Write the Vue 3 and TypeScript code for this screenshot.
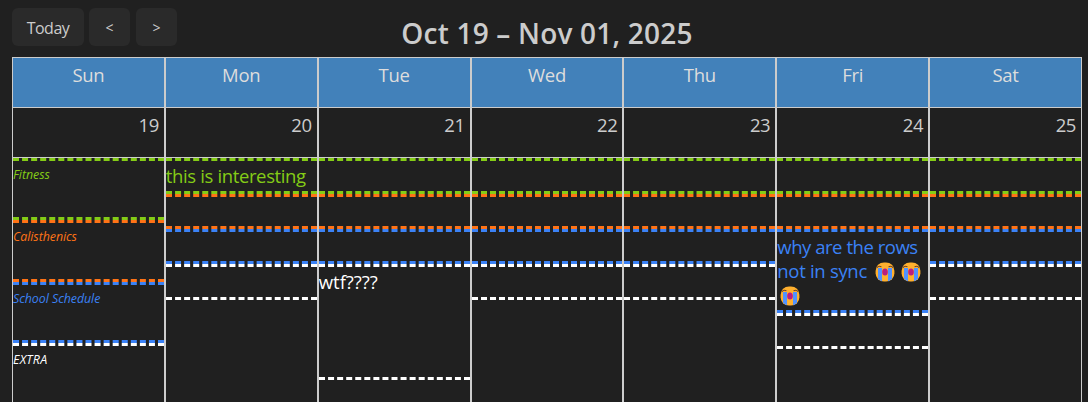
<script setup lang="ts">
interface Entry {
  kind: 'fitness' | 'calisthenics' | 'school' | 'extra'
  height: number
  lines?: string[]
  emoji?: number[]
}
interface Day {
  name: string
  date: number
  labels?: boolean
  entries: Entry[]
}

const plain = (): Entry[] => [
  { kind: 'fitness', height: 36 },
  { kind: 'calisthenics', height: 35 },
  { kind: 'school', height: 35 },
  { kind: 'extra', height: 36 },
]

const days: Day[] = [
  {
    name: 'Sun', date: 19, labels: true,
    entries: [
      { kind: 'fitness', height: 62, lines: ['Fitness'] },
      { kind: 'calisthenics', height: 62, lines: ['Calisthenics'] },
      { kind: 'school', height: 61, lines: ['School Schedule'] },
      { kind: 'extra', height: 62, lines: ['EXTRA'] },
    ],
  },
  {
    name: 'Mon', date: 20,
    entries: [{ kind: 'fitness', height: 36, lines: ['this is interesting'] }, ...plain().slice(1)],
  },
  {
    name: 'Tue', date: 21,
    entries: [...plain().slice(0, 3), { kind: 'extra', height: 116, lines: ['wtf????'] }],
  },
  { name: 'Wed', date: 22, entries: plain() },
  { name: 'Thu', date: 23, entries: plain() },
  {
    name: 'Fri', date: 24,
    entries: [
      ...plain().slice(0, 2),
      { kind: 'school', height: 84, lines: ['why are the rows', 'not in sync', ''], emoji: [0, 2, 1] },
      { kind: 'extra', height: 36 },
    ],
  },
  { name: 'Sat', date: 25, entries: plain() },
]
</script>

<template>
  <main class="calendar">
    <header class="toolbar">
      <nav class="buttons">
        <button class="today">Today</button>
        <button class="prev">&lt;</button>
        <button class="next">&gt;</button>
      </nav>
      <h1>Oct 19 – Nov 01, 2025</h1>
    </header>
    <section class="grid">
      <div v-for="day in days" :key="day.name" class="day">
        <div class="name">{{ day.name }}</div>
        <div class="date">{{ day.date }}</div>
        <div
          v-for="entry in day.entries"
          :key="entry.kind"
          class="entry"
          :class="[entry.kind, { label: day.labels }]"
          :style="{ height: entry.height + 'px' }"
        >
          <p v-for="(line, i) in entry.lines" :key="i">
            <span :class="'line-' + i">{{ line }}</span>
            <svg v-for="n in entry.emoji?.[i] ?? 0" :key="n" class="cry" viewBox="0 0 20 20">
              <rect x=".6" y=".4" width="18.8" height="19.2" rx="8.4" fill="#ffb02e" />
              <path d="M3 6h4v13.2Q4.6 18.500 3 16.800zM13 6h4v10.800Q15.400 18.500 13 19.200z" fill="#5092ff" />
              <path d="M2 5.600Q3.600 3.400 6.400 4.800M18 5.600Q16.400 3.400 13.600 4.800" fill="none" stroke="#6b4028" stroke-width="1.100" />
              <ellipse cx="10" cy="10" rx="2.8" ry="3.6" fill="#bb1d80" />
            </svg>
          </p>
        </div>
      </div>
    </section>
  </main>
</template>

<style>
body { background: #202020; overflow: hidden; }
</style>

<style scoped>
.calendar {
  box-sizing: border-box;
  height: 402px;
  padding: 8px 6px 0 12px;
  overflow: hidden;
  color: #ccc;
  background: #202020;
  font-family: "Open Sans", "Noto Sans", sans-serif;
}
.toolbar { display: grid; grid-template-columns: 1fr auto 1fr; height: 49px; }
.buttons { display: flex; align-items: flex-start; }
button {
  height: 38px;
  padding: 0;
  border: 0;
  border-radius: 6px;
  background: #2a2a2a;
  color: #ccc;
  font: 16px/36px "Open Sans", "Noto Sans", sans-serif;
}
.today { width: 72px; margin-right: 5px; padding-top: 2px; letter-spacing: -.5px; }
.prev { width: 41px; margin-right: 6px; }
.next { width: 41px; }
.prev, .next { font-size: 14px; padding-top: 2px; }
h1 { margin: 0; font-size: 28px; line-height: 50px; font-weight: 600; letter-spacing: .2px; white-space: nowrap; }
.grid { display: grid; grid-template-columns: repeat(7, minmax(0, 1fr)); height: 500px; }
.day { border: 1px solid #ccc; }
.name {
  height: 49px;
  border-bottom: 1px solid #ccc;
  background: #4281ba;
  color: #ddd;
  font-size: 18.5px;
  line-height: 33px;
  letter-spacing: -.25px;
  text-align: center;
}
.date {
  height: 49px;
  padding-right: 5px;
  border-bottom: 1px solid #ccc;
  font-size: 18.5px;
  line-height: 33px;
  letter-spacing: -.4px;
  text-align: right;
}
.entry {
  box-sizing: border-box;
  border-top: 3px dashed;
  border-bottom: 3px dashed;
  white-space: nowrap;
}
.entry p { margin: 0; height: 24px; font-size: 18.5px; line-height: 30px; display: flex; }
.fitness { border-color: #84cc16; color: #84cc16; }
.calisthenics { border-color: #ff7316; color: #ff7316; }
.school { border-color: #3b82f6; color: #3b82f6; }
.extra { border-color: #fff; color: #fff; }
.fitness p { letter-spacing: -.37px; }
.school p { letter-spacing: -.46px; }
.school .line-1 { width: 94.5px; letter-spacing: -.3px; }
.entry.label p { font-size: 12.4px; line-height: 28px; font-style: italic; letter-spacing: -.05px; }
.entry.extra.label p { letter-spacing: .25px; }
.cry { flex: none; width: 20px; height: 20px; margin: 5.5px 3px 0; }
</style>
